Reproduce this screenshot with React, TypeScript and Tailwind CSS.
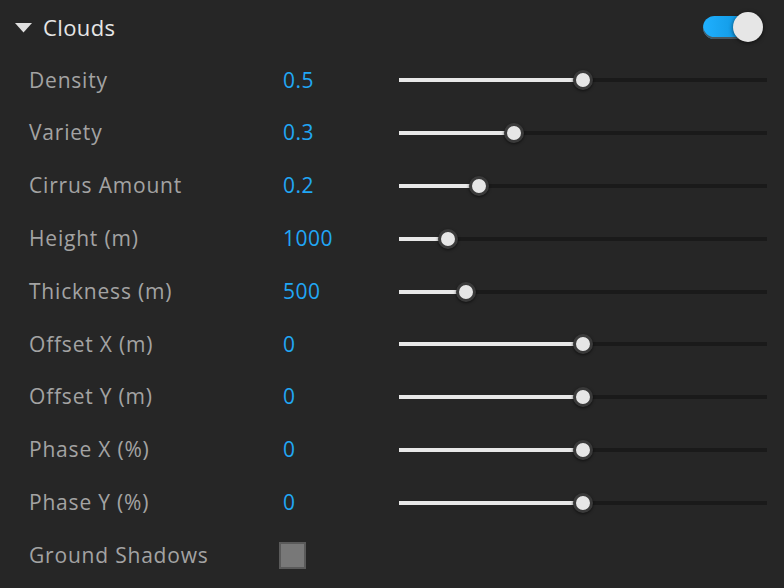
import React from "react";

const rows: { label: string; value: string; thumb: number }[] = [
  { label: "Density", value: "0.5", thumb: 583 },
  { label: "Variety", value: "0.3", thumb: 514 },
  { label: "Cirrus Amount", value: "0.2", thumb: 479 },
  { label: "Height (m)", value: "1000", thumb: 448 },
  { label: "Thickness (m)", value: "500", thumb: 466 },
  { label: "Offset X (m)", value: "0", thumb: 583 },
  { label: "Offset Y (m)", value: "0", thumb: 583 },
  { label: "Phase X (%)", value: "0", thumb: 583 },
  { label: "Phase Y (%)", value: "0", thumb: 583 },
];

function Slider({ thumb }: { thumb: number }) {
  const fill = thumb - 399;
  return (
    <div className="relative h-[4px] w-[368px] bg-[#1a1a1a]">
      <div className="absolute left-0 top-0 h-[4px] bg-[#e8e8e8]" style={{ width: fill }} />
      <div
        className="absolute top-[-8px] h-[20px] w-[20px] rounded-full border-[3px] border-[#3a3a3a] bg-[#e6e6e6] shadow-[0_1px_3px_rgba(0,0,0,0.6)]"
        style={{ left: fill - 10 }}
      />
    </div>
  );
}

export default function App() {
  return (
    <div
      className="w-[784px] h-[588px] bg-[#262626] overflow-hidden"
      style={{ fontFamily: '"Open Sans", "Noto Sans", sans-serif' }}
    >
      <div className="flex items-center h-[54px] pl-[15px] pr-[21px]">
        <svg width="17" height="10" viewBox="0 0 17 10" className="mt-[1px]">
          <polygon points="0,0 17,0 8.5,9.5" fill="#e0e0e0" />
        </svg>
        <span className="ml-[11px] text-[22px] text-[#e6e6e6] tracking-[0.4px]">Clouds</span>
        <div className="ml-auto relative w-[60px] h-[30px] flex items-center">
          <div className="h-[23px] w-[50px] rounded-full bg-gradient-to-r from-[#1fb0ff] to-[#0a90d8] shadow-[inset_0_-2px_0_rgba(80,80,80,0.9)]" />
          <div className="absolute right-0 top-0 h-[30px] w-[30px] rounded-full bg-[#e6e6e6] shadow-[0_1px_4px_rgba(0,0,0,0.6)]" />
        </div>
      </div>
      <div className="flex flex-col">
        {rows.map((r) => (
          <div key={r.label} className="flex items-center h-[52.8px]">
            <span className="w-[283px] pl-[29px] text-[21px] text-[#a3a3a3] tracking-[0.8px]">{r.label}</span>
            <span className="w-[116px] text-[21px] text-[#21a6f5] tracking-[0.5px]">{r.value}</span>
            <Slider thumb={r.thumb} />
          </div>
        ))}
        <div className="flex items-center h-[52.8px]">
          <span className="w-[279px] pl-[29px] text-[21px] text-[#a3a3a3] tracking-[0.8px]">Ground Shadows</span>
          <div className="w-[27px] h-[27px] bg-[#787878] border-2 border-[#5a5a5a]" />
        </div>
      </div>
    </div>
  );
}
